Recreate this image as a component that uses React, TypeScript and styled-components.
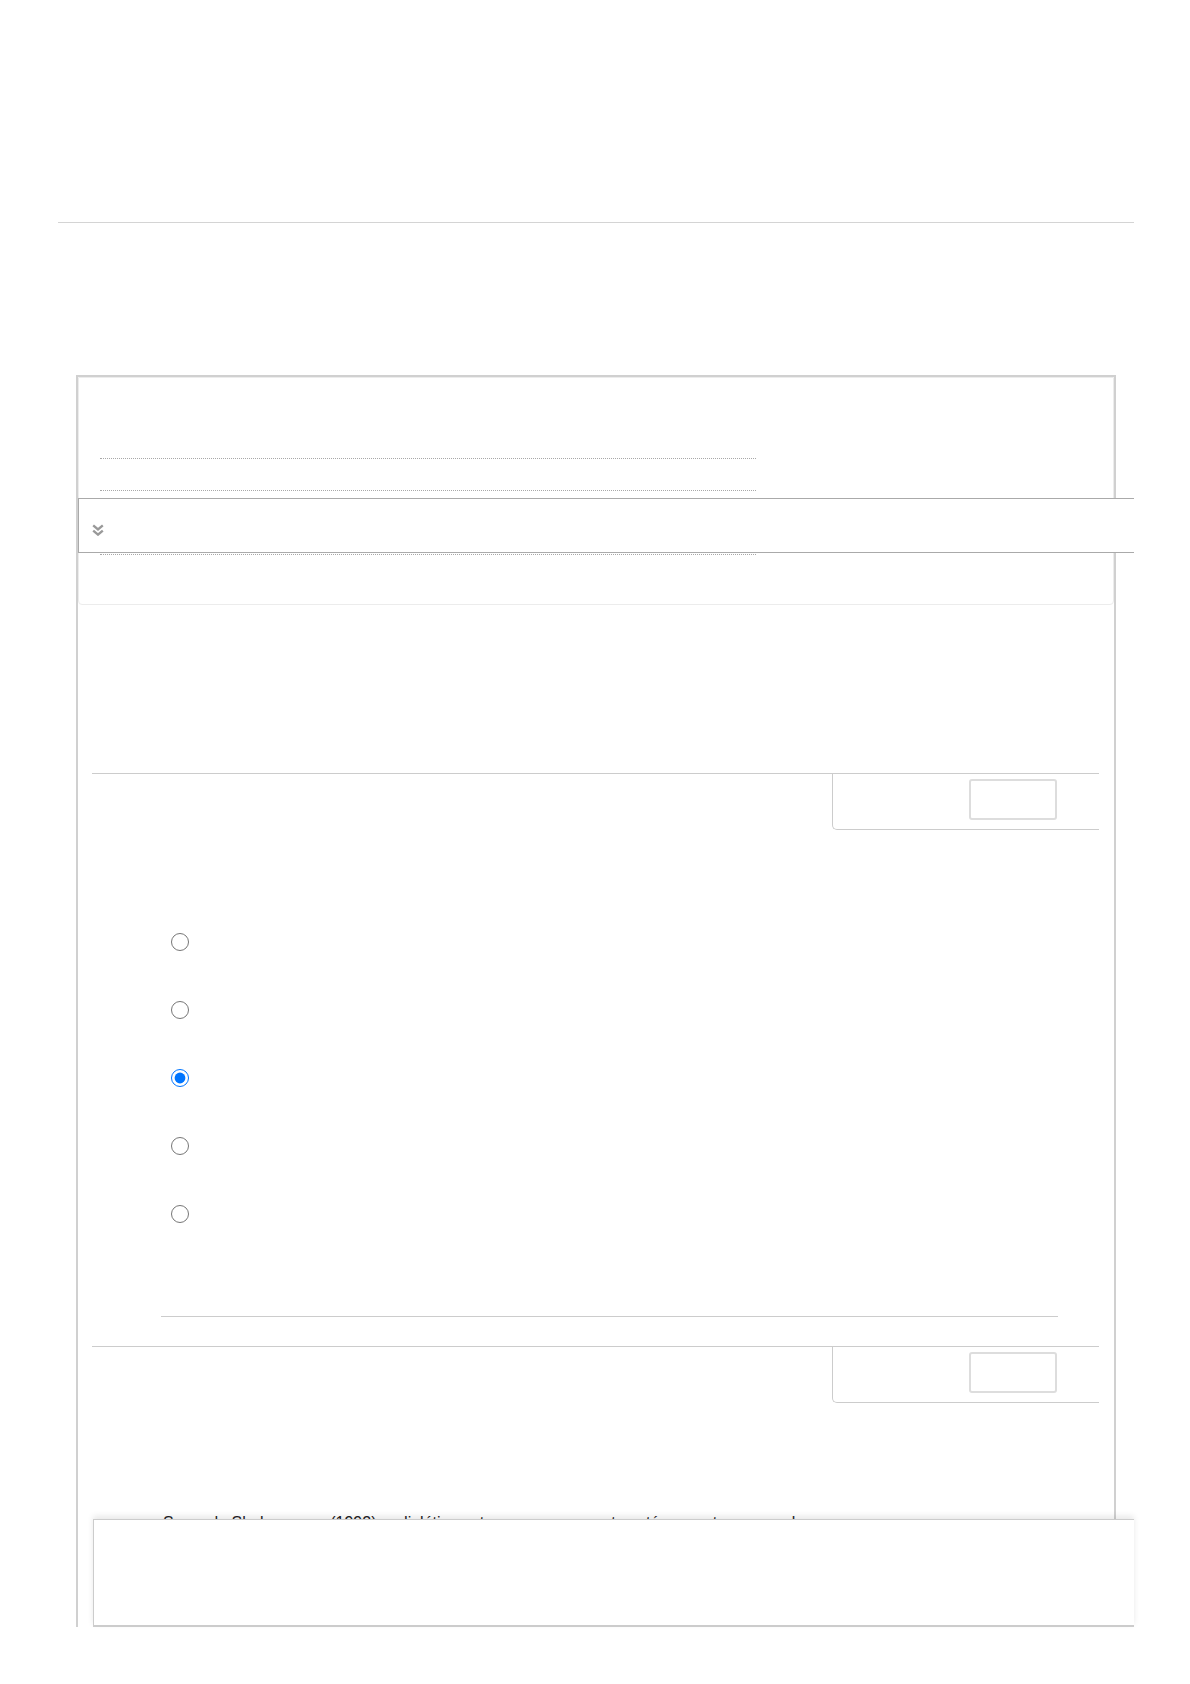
import styled, { createGlobalStyle } from "styled-components";

const GlobalStyle = createGlobalStyle`
  * {
    box-sizing: border-box;
  }
  body {
    margin: 0;
    background: #ffffff;
    font-family: "DejaVu Sans", "Liberation Sans", sans-serif;
    color: #1d2125;
  }
`;

const Page = styled.div`
  width: 1190px;
  min-height: 1684px;
`;

const Header = styled.header`
  height: 223px;
  margin: 0 56px 0 58px;
  border-bottom: 1px solid #d4d4d4;
`;

const Frame = styled.main`
  position: relative;
  display: flex;
  flex-flow: column;
  width: 1040px;
  height: 1252px;
  margin: 152px 0 0 76px;
  border: 2px solid #d0d0d0;
  border-bottom: 0;
`;

const Summary = styled.section`
  position: relative;
  height: 228px;
  padding: 49px 0 0 21px;
  border: 1px solid #ececec;
  border-radius: 0 0 4px 4px;
  background: #ffffff;
`;

const DottedField = styled.div`
  width: 656px;
  height: 32px;
  border-bottom: 1px dotted #a8a8a8;
`;

const CollapseBar = styled.div`
  position: absolute;
  top: 120px;
  left: -1px;
  width: 1056px;
  height: 55px;
  padding: 25px 0 0 13px;
  background: #ffffff;
  border: 1px solid #aaaaaa;
  border-right: 0;

  svg {
    display: block;
  }
`;

const Question = styled.section<{ $gap: number }>`
  margin: ${(p) => p.$gap}px 15px 0 14px;
`;

const QuestionHead = styled.div`
  display: flex;
  justify-content: flex-end;
  border-top: 1px solid #cccccc;
`;

const InfoBox = styled.div`
  width: 267px;
  height: 56px;
  padding: 5px 0 0 136px;
  border-left: 1px solid #cccccc;
  border-bottom: 1px solid #cccccc;
  border-radius: 0 0 0 5px;
`;

const FlagButton = styled.div`
  width: 88px;
  height: 41px;
  border: 2px solid #dddddd;
  border-radius: 3px;
  background: #ffffff;
`;

const Answers = styled.div`
  display: flex;
  flex-flow: column;
  margin-top: 103px;
  padding-left: 79px;
`;

const AnswerRow = styled.label`
  display: flex;
  align-items: flex-start;
  height: 68px;
`;

const Radio = styled.input`
  width: 18px;
  height: 18px;
  margin: 0;
`;

const Divider = styled.hr`
  height: 0;
  margin: 43px 41px 0 69px;
  border: 0;
  border-top: 1px solid #cccccc;
`;

const Passage = styled.p`
  margin: 108px 0 0 71px;
  font-family: "Liberation Sans", Arial, sans-serif;
  font-size: 16px;
  line-height: 24px;
  color: #1d2125;
  white-space: nowrap;
`;

const Footer = styled.div`
  position: absolute;
  top: 1142px;
  left: 15px;
  width: 1041px;
  height: 108px;
  background: #ffffff;
  border: 1px solid #cccccc;
  border-right: 0;
  border-bottom: 2px solid #cccccc;
  box-shadow: 0 -3px 6px rgba(0, 0, 0, 0.09);
`;

const ChevronsDown = () => (
  <svg width="12" height="12" viewBox="0 0 12 12" fill="none">
    <polyline
      points="1.2,1.4 6,5.4 10.8,1.4"
      stroke="#999999"
      strokeWidth="2.4"
    />
    <polyline
      points="1.2,6.6 6,10.6 10.8,6.6"
      stroke="#999999"
      strokeWidth="2.4"
    />
  </svg>
);

const answers = [false, false, true, false, false];

export default function App() {
  return (
    <Page>
      <GlobalStyle />
      <Header />
      <Frame>
        <Summary>
          <DottedField />
          <DottedField />
          <DottedField />
          <DottedField />
          <CollapseBar>
            <ChevronsDown />
          </CollapseBar>
        </Summary>

        <Question $gap={168}>
          <QuestionHead>
            <InfoBox>
              <FlagButton />
            </InfoBox>
          </QuestionHead>
          <Answers>
            {answers.map((checked, i) => (
              <AnswerRow key={i}>
                <Radio type="radio" name="q1" defaultChecked={checked} />
              </AnswerRow>
            ))}
          </Answers>
          <Divider />
        </Question>

        <Question $gap={29}>
          <QuestionHead>
            <InfoBox>
              <FlagButton />
            </InfoBox>
          </QuestionHead>
          <Passage>
            Segundo Shakespeare (1992), a dialética entre o amor e a morte está presente na sua obra.
          </Passage>
        </Question>

        <Footer />
      </Frame>
    </Page>
  );
}
